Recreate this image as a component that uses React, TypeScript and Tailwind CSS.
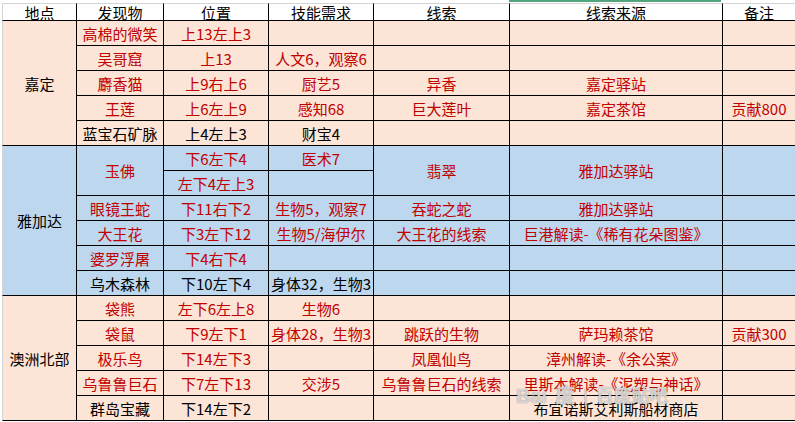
import React from "react";

type Cell = { t?: string; red?: boolean; rs?: number } | null;

type Group = { name: string; bg: string; rows: Cell[][] };

const R = (t: string, rs?: number): Cell => ({ t, red: true, rs });
const K = (t: string, rs?: number): Cell => ({ t, red: false, rs });
const E = (rs?: number): Cell => ({ rs });

const headers = ["地点", "发现物", "位置", "技能需求", "线索", "线索来源", "备注"];

const groups: Group[] = [
  {
    name: "嘉定",
    bg: "bg-[#fce4d6]",
    rows: [
      [R("高棉的微笑"), R("上13左上3"), E(), E(), E(), E()],
      [R("吴哥窟"), R("上13"), R("人文6，观察6"), E(), E(), E()],
      [R("麝香猫"), R("上9右上6"), R("厨艺5"), R("异香"), R("嘉定驿站"), E()],
      [R("王莲"), R("上6左上9"), R("感知68"), R("巨大莲叶"), R("嘉定茶馆"), R("贡献800")],
      [K("蓝宝石矿脉"), K("上4左上3"), K("财宝4"), E(), E(), E()],
    ],
  },
  {
    name: "雅加达",
    bg: "bg-[#bdd7ee]",
    rows: [
      [R("玉佛", 2), R("下6左下4"), R("医术7"), R("翡翠", 2), R("雅加达驿站", 2), E(2)],
      [null, R("左下4左上3"), E(), null, null, null],
      [R("眼镜王蛇"), R("下11右下2"), R("生物5，观察7"), R("吞蛇之蛇"), R("雅加达驿站"), E()],
      [R("大王花"), R("下3左下12"), R("生物5/海伊尔"), R("大王花的线索"), R("巨港解读-《稀有花朵图鉴》"), E()],
      [R("婆罗浮屠"), R("下4右下4"), E(), E(), E(), E()],
      [K("乌木森林"), K("下10左下4"), K("身体32，生物3"), E(), E(), E()],
    ],
  },
  {
    name: "澳洲北部",
    bg: "bg-[#fce4d6]",
    rows: [
      [R("袋熊"), R("左下6左上8"), R("生物6"), E(), E(), E()],
      [R("袋鼠"), R("下9左下1"), R("身体28，生物3"), R("跳跃的生物"), R("萨玛赖茶馆"), R("贡献300")],
      [R("极乐鸟"), R("下14左下3"), E(), R("凤凰仙鸟"), R("漳州解读-《余公案》"), E()],
      [R("乌鲁鲁巨石"), R("下7左下13"), R("交涉5"), R("乌鲁鲁巨石的线索"), R("里斯本解读-《泥塑与神话》"), E()],
      [K("群岛宝藏"), K("下14左下2"), E(), E(), K("布宜诺斯艾利斯船材商店"), E()],
    ],
  },
];

const spanClass: Record<number, string> = {
  1: "",
  2: "row-span-2",
  5: "row-span-5",
  6: "row-span-6",
};

export default function App() {
  return (
    <div className="relative h-[422px] w-[795px] overflow-hidden bg-white font-['Noto_Sans_CJK_SC',sans-serif] text-[15px] leading-none">
      {/* excel column selection bar */}
      <div className="h-[3px]">
        <div className="ml-[509px] h-[2px] w-[212px] bg-[#52a67e]" />
      </div>

      <div className="ml-[2px] grid grid-cols-[75px_87px_105px_105px_136px_213px_1fr] grid-rows-[18px_repeat(16,25px)]">
        {headers.map((h, i) => (
          <div
            key={h}
            className={`flex items-center justify-center border-t border-b border-t-[#d4d4d4] border-b-black bg-white pt-[1px] text-black ${
              i === 0 ? "border-l border-l-[#d4d4d4]" : ""
            } ${i < 6 ? "border-r border-r-black" : ""}`}
          >
            {h}
          </div>
        ))}

        {groups.map((g) => (
          <React.Fragment key={g.name}>
            {g.rows.map((row, ri) => (
              <React.Fragment key={ri}>
                {ri === 0 && (
                  <div
                    className={`${spanClass[g.rows.length]} ${g.bg} flex items-center justify-center border-l border-r border-b border-l-[#d4d4d4] border-r-black border-b-black text-black`}
                  >
                    {g.name}
                  </div>
                )}
                {row.map((c, ci) =>
                  c === null ? null : (
                    <div
                      key={ci}
                      className={`${spanClass[c.rs ?? 1]} ${g.bg} flex items-center justify-center whitespace-nowrap border-b border-b-black ${
                        ci < 5 ? "border-r border-r-black" : ""
                      } ${c.red ? "text-[#c00000]" : "text-black"}`}
                    >
                      {c.t}
                    </div>
                  )
                )}
              </React.Fragment>
            ))}
          </React.Fragment>
        ))}
      </div>

      {/* baidu tieba watermark, lies over the last rows */}
      <div
        aria-hidden
        className="pointer-events-none absolute left-[516px] top-[386px] flex items-center gap-2 font-['Liberation_Sans','Noto_Sans_CJK_SC',sans-serif] text-[20px] font-bold text-white/70 [text-shadow:0_0_1px_rgba(80,80,80,0.8)]"
      >
        <span>Bai</span>
        <span>度</span>
        <span className="text-[18px] font-normal">|</span>
        <span className="text-[18px]">百度贴吧</span>
      </div>
    </div>
  );
}
